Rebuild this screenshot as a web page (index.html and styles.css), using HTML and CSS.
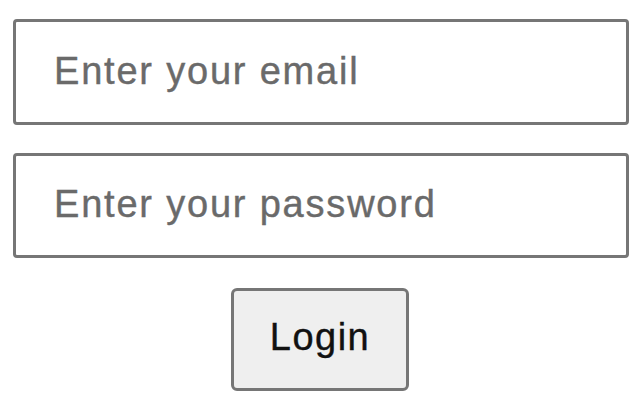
FILE: index.html
```html
<!DOCTYPE html>
<html>
<head>
<meta charset="utf-8">
<link rel="stylesheet" href="styles.css">
</head>
<body>
<form class="login-form">
  <input class="field" type="email" placeholder="Enter your email">
  <input class="field field-pass" type="password" placeholder="Enter your password">
  <button class="login-btn" type="button">Login</button>
</form>
</body>
</html>
```
FILE: styles.css
```css
html, body {
  margin: 0;
  padding: 0;
  background: #ffffff;
}
.login-form {
  display: flex;
  flex-direction: column;
  align-items: stretch;
  padding: 19px 11px 0 13px;
  gap: 28px;
}
.field {
  box-sizing: border-box;
  height: 106px;
  margin: 0;
  padding: 0 0 2px 38px;
  border: 3px solid #767676;
  border-radius: 4px;
  background: #ffffff;
  font-family: Arial, "Liberation Sans", sans-serif;
  font-size: 38px;
  letter-spacing: 1.8px;
  color: #222;
  outline: none;
  -webkit-text-stroke: 0.4px #6a6a6a;
}
.field-pass {
  height: 105px;
}
.field::placeholder {
  color: #6a6a6a;
  opacity: 1;
}
.login-btn {
  box-sizing: border-box;
  align-self: center;
  margin: 2px 0 0 -2px;
  width: 178px;
  height: 103px;
  border: 3px solid #767676;
  border-radius: 6px;
  background: #efefef;
  font-family: Arial, "Liberation Sans", sans-serif;
  font-size: 38px;
  letter-spacing: 1.5px;
  color: #111;
  -webkit-text-stroke: 0.4px #111;
  padding: 0 0 4px 0;
}
```
